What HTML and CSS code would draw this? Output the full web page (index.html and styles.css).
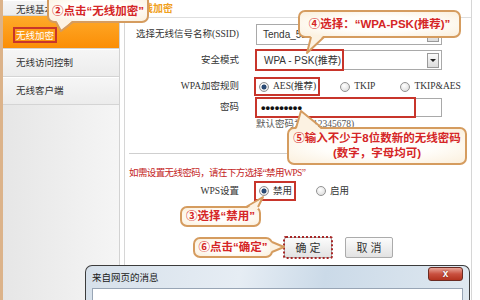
FILE: index.html
```html
<html>
  <head>
    <meta charset="UTF-8" />
    <title>无线加密</title>
    <link rel="stylesheet" href="styles.css">
  </head>
  <body>
    <div class="page">
      <aside class="sidebar">
        <div class="nav-item first">无线基本设置</div>
        <div class="nav-item active"><span class="mark">无线加密</span></div>
        <div class="nav-item">无线访问控制</div>
        <div class="nav-item">无线客户端</div>
      </aside>

      <main class="main">
        <div class="main-title">无线加密</div>
        <div class="form">
          <div class="row r-ssid">
            <span class="label">选择无线信号名称(SSID)</span>
            <div class="field">
              <span class="value">Tenda_5E8A60</span>
              <span class="drop"></span>
            </div>
          </div>
          <div class="row r-mode">
            <span class="label">安全模式</span>
            <div class="field">
              <span class="value sel mark-box">WPA - PSK(推荐)</span>
              <span class="drop arrow"></span>
            </div>
          </div>
          <div class="row r-rule">
            <span class="label">WPA加密规则</span>
            <span class="opt first mark-box"><span class="radio on"></span>AES(推荐)</span>
            <span class="opt o-tkip"><span class="radio"></span>TKIP</span>
            <span class="opt o-both"><span class="radio"></span>TKIP&amp;AES</span>
          </div>
          <div class="row r-pass">
            <span class="label">密码</span>
            <div class="field">
              <span class="dots mark-box">•••••••••</span>
            </div>
          </div>
          <div class="row r-note">默认密码为：12345678)</div>
          <div class="sep"></div>
          <div class="warn">如需设置无线密码，请在下方选择“禁用WPS”</div>
          <div class="row r-wps">
            <span class="label">WPS设置</span>
            <span class="opt first mark-box"><span class="radio on"></span>禁用</span>
            <span class="opt o-on"><span class="radio"></span>启用</span>
          </div>
          <div class="buttons">
            <button class="btn ok">确定</button>
            <button class="btn">取消</button>
          </div>
        </div>
      </main>
    </div>

    <!-- 注释用の吹き出し -->
    <div class="callout c2">②点击“无线加密”
      <svg class="tail"><polygon points="9,26 26,26 14,37" /><polyline points="9,28 14,37 26,28" /></svg>
    </div>
    <div class="callout c4">④选择：“WPA-PSK(推荐)”
      <svg class="tail"><polygon points="13,25 26,25 9,43" /><polyline points="13,27 9,43 26,27" /></svg>
    </div>
    <div class="callout c5">⑤输入不少于8位数新的无线密码<br>(数字，字母均可)
      <svg class="tail"><polygon points="9,3 35,3 14,-16" /><polyline points="9,1 14,-16 35,1" /></svg>
    </div>
    <div class="callout c3">③选择“禁用”
      <svg class="tail"><polygon points="66,3 78,3 83,-9" /><polyline points="66,1 83,-9 78,1" /></svg>
    </div>
    <div class="callout c6">⑥点击“确定”
      <svg class="tail"><polygon points="77,5 77,15 91,10" /><polyline points="79,5 91,10 79,15" /></svg>
    </div>

    <div class="dialog">
      <div class="dialog-title">来自网页的消息</div>
      <span class="dialog-close">x</span>
      <div class="dialog-body"></div>
    </div>
  </body>
</html>
```

FILE: styles.css
```css
/* ルーターの設定画面 */
body {
  position: relative;
  width: 480px;
  height: 300px;
  margin: 0;
  overflow: hidden;
  background: #fff;
  color: #333;
  font-family: "Liberation Serif", "Noto Sans CJK SC", serif;
  font-size: 9.5px;
  line-height: 13px;
}
.page {
  display: flex;
  height: 300px;
}

/** サイドメニュー */
.sidebar {
  flex: none;
  box-sizing: border-box;
  width: 120px;
  border-left: 3px solid #dcb38a;
  border-right: 1px solid #d2d2d2;
  background: linear-gradient(to right, #e6e6e6, #f5f5f5);
}
.nav-item {
  display: flex;
  align-items: center;
  height: 27px;
  padding-left: 13px;
  border-bottom: 1px solid #d4d4d4;
  background: linear-gradient(#f6f6f6, #ececec);
  box-shadow: inset 0 1px 0 #fff;
  font-family: "Noto Sans CJK SC", sans-serif;
  color: #333;
}
.nav-item.first {
  box-sizing: border-box;
  height: 16px;
  padding-top: 3px;
}
.nav-item.active {
  box-sizing: border-box;
  height: 33px;
  padding: 6px 0 0 10px;
  background: linear-gradient(#ffaa2a, #fb8e06);
  box-shadow: none;
  color: #fff;
}
.nav-item .mark {
  display: inline-block;
  padding: 0 1px;
  border: 2px solid #c8352b;
  line-height: 12px;
}

/** メイン */
.main {
  flex: none;
  box-sizing: border-box;
  width: 348px;
  margin-left: 4px;
  border-left: 1px solid #d6d6d6;
  border-right: 1px solid #d6d6d6;
}
.main-title {
  height: 17px;
  padding-left: 8px;
  border-bottom: 1px solid #dedede;
  color: #f0a020;
  font: bold 10px/15px "Noto Sans CJK SC", sans-serif;
}
.form {
  padding-left: 4px;
}
.row {
  display: flex;
  align-items: center;
}
.label {
  flex: none;
  width: 110px;
  margin-right: 17px;
  text-align: right;
  white-space: nowrap;
}
.field {
  display: flex;
  align-items: center;
  box-sizing: border-box;
  width: 186px;
  height: 100%;
  border: 1px solid #a9a9a9;
  background: #fff;
}
.value {
  padding-left: 6px;
  font-family: "Liberation Sans", "Noto Sans CJK SC", sans-serif;
  font-size: 10px;
  color: #333;
}
.drop {
  display: flex;
  align-items: center;
  justify-content: center;
  box-sizing: border-box;
  width: 12px;
  height: 15px;
  margin: 0 2px 0 auto;
  border: 1px solid #9a9a9a;
  background: linear-gradient(#fbfbfb, #dcdcdc);
}
.drop.arrow::after {
  content: "";
  border-left: 3px solid transparent;
  border-right: 3px solid transparent;
  border-top: 3px solid #222;
}
.mark-box {
  outline: 2px solid #c8352b;
}

.r-ssid {
  height: 21px;
  margin-top: 6px;
}
.r-mode {
  height: 20px;
  margin-top: 5px;
}
.r-mode .sel {
  display: flex;
  align-items: center;
  box-sizing: border-box;
  width: 85px;
  height: 100%;
  padding-left: 7px;
}
.r-rule {
  height: 15px;
  margin-top: 9px;
}
.r-pass {
  height: 19px;
  margin-top: 4px;
}
.dots {
  display: flex;
  align-items: center;
  box-sizing: border-box;
  width: 157px;
  height: 100%;
  padding-left: 4px;
  color: #111;
  font: bold 13px "Liberation Sans", sans-serif;
}
.r-note {
  height: 13px;
  margin-top: 1px;
  padding-left: 127px;
  color: #555;
}
.sep {
  margin: 22px 4px 0 0;
  border-top: 1px solid #cfcfcf;
}
.warn {
  height: 14px;
  margin-top: 12px;
  line-height: 14px;
  letter-spacing: -0.6px;
  color: #c42525;
}
.r-wps {
  height: 16px;
  margin-top: 3px;
}

/** ラジオボタン */
.opt {
  display: flex;
  align-items: center;
  gap: 4px;
  height: 100%;
  white-space: nowrap;
}
.opt.first {
  box-sizing: border-box;
  padding: 0 2px 0 3px;
}
.o-tkip {
  margin-left: 22px;
}
.o-both {
  margin-left: 25px;
}
.o-on {
  margin-left: 22px;
}
.radio {
  flex: none;
  box-sizing: border-box;
  width: 10px;
  height: 10px;
  border: 1px solid #929292;
  border-radius: 50%;
  background: radial-gradient(circle at 40% 35%, #fff, #d6d6d6);
}
.radio.on {
  background:
    radial-gradient(circle, #2a4a74 0 2.2px, transparent 2.8px),
    radial-gradient(circle at 40% 35%, #fff, #d6d6d6);
}

/** ボタン */
.buttons {
  display: flex;
  gap: 13px;
  margin-top: 38px;
  padding-left: 155px;
}
.btn {
  width: 48px;
  height: 21px;
  padding: 0 0 0 3px;
  border: 1px solid #ababab;
  border-radius: 2px;
  background: linear-gradient(#fcfcfc, #e2e2e2);
  color: #333;
  font: 11px/19px "Noto Sans CJK SC", sans-serif;
  letter-spacing: 3px;
}
.btn.ok {
  outline: 2px dotted #a82828;
  outline-offset: -1px;
}

/** 吹き出し */
.callout {
  position: absolute;
  z-index: 2;
  display: flex;
  align-items: center;
  justify-content: center;
  box-sizing: border-box;
  border: 2px solid #d59c5f;
  border-radius: 7px;
  background: radial-gradient(ellipse at center, #fffefb 45%, #fbefdc);
  color: #d52626;
  font: bold 11.5px/15px "Liberation Sans", "Noto Sans CJK SC", sans-serif;
  text-align: center;
  white-space: nowrap;
}
.tail {
  position: absolute;
  left: -2px;
  top: -2px;
  width: 1px;
  height: 1px;
  overflow: visible;
}
.tail polygon {
  fill: #fcf2e2;
}
.tail polyline {
  fill: none;
  stroke: #d59c5f;
  stroke-width: 2;
  stroke-linejoin: round;
}
.c2 {
  left: 47px;
  top: -6px;
  width: 102px;
  height: 29px;
  padding-top: 6px;
}
.c4 {
  left: 298px;
  top: 10px;
  width: 163px;
  height: 28px;
}
.c5 {
  left: 287px;
  top: 127px;
  width: 180px;
  height: 38px;
}
.c3 {
  left: 180px;
  top: 206px;
  width: 81px;
  height: 21px;
}
.c6 {
  left: 193px;
  top: 237px;
  width: 80px;
  height: 21px;
}

/** ダイアログ */
.dialog {
  position: absolute;
  z-index: 3;
  left: 85px;
  top: 265px;
  box-sizing: border-box;
  width: 385px;
  height: 35px;
  padding: 0 6px;
  border: 1px solid #3c3c3c;
  border-bottom: none;
  border-radius: 7px 7px 0 0;
  background: linear-gradient(100deg, #d6e0ea, #e6edf4 40%, #cbdae8 62%, #dfe8f0);
}
.dialog-title {
  display: flex;
  align-items: center;
  height: 22px;
  color: #1a1a1a;
  font-family: "Noto Sans CJK SC", sans-serif;
  font-size: 9.5px;
}
.dialog-close {
  position: absolute;
  top: 1px;
  right: 6px;
  box-sizing: border-box;
  width: 35px;
  height: 14px;
  border: 1px solid #6a2b22;
  border-radius: 3px;
  background: linear-gradient(#e9a497, #c9503f 50%, #b3331f);
  color: #fff;
  font: bold 10px/11px "Liberation Sans", sans-serif;
  text-align: center;
  text-shadow: 0 0 2px #5a1a10;
}
.dialog-body {
  height: 12px;
  border: 1px solid #98a5b5;
  border-bottom: none;
  background: #fff;
}
```
